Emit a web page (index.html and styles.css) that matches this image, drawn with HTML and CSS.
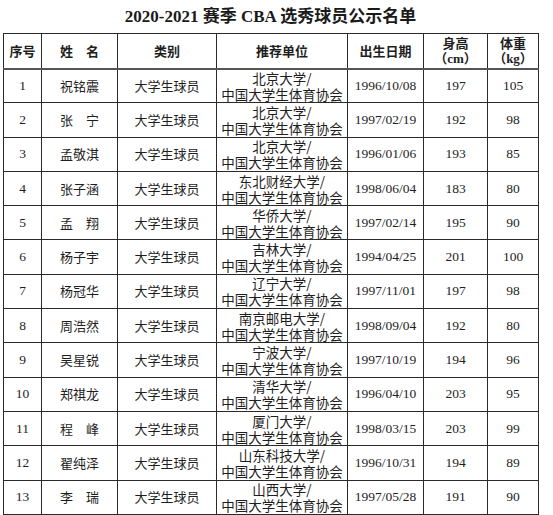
FILE: index.html
```html
<!DOCTYPE html>
<html lang="zh-CN">
<head>
<meta charset="utf-8">
<title>2020-2021 赛季 CBA 选秀球员公示名单</title>
<link rel="stylesheet" href="styles.css">
</head>
<body>
<div class="page">
  <h1 class="title">2020-2021 赛季 CBA 选秀球员公示名单</h1>
  <table class="roster">
    <colgroup>
      <col class="c-no"><col class="c-name"><col class="c-type"><col class="c-unit"><col class="c-date"><col class="c-h"><col class="c-w">
    </colgroup>
    <thead>
      <tr>
        <th>序号</th>
        <th>姓　名</th>
        <th>类别</th>
        <th>推荐单位</th>
        <th>出生日期</th>
        <th class="two"><span class="ln">身高</span><span class="ln unit">（cm）</span></th>
        <th class="two"><span class="ln">体重</span><span class="ln unit">（kg）</span></th>
      </tr>
    </thead>
    <tbody>
      <tr><td class="num">1</td><td>祝铭震</td><td>大学生球员</td><td class="unit-cell"><span class="ln">北京大学/</span><span class="ln">中国大学生体育协会</span></td><td class="num">1996/10/08</td><td class="num">197</td><td class="num">105</td></tr>
      <tr><td class="num">2</td><td>张　宁</td><td>大学生球员</td><td class="unit-cell"><span class="ln">北京大学/</span><span class="ln">中国大学生体育协会</span></td><td class="num">1997/02/19</td><td class="num">192</td><td class="num">98</td></tr>
      <tr><td class="num">3</td><td>孟敬淇</td><td>大学生球员</td><td class="unit-cell"><span class="ln">北京大学/</span><span class="ln">中国大学生体育协会</span></td><td class="num">1996/01/06</td><td class="num">193</td><td class="num">85</td></tr>
      <tr><td class="num">4</td><td>张子涵</td><td>大学生球员</td><td class="unit-cell"><span class="ln">东北财经大学/</span><span class="ln">中国大学生体育协会</span></td><td class="num">1998/06/04</td><td class="num">183</td><td class="num">80</td></tr>
      <tr><td class="num">5</td><td>孟　翔</td><td>大学生球员</td><td class="unit-cell"><span class="ln">华侨大学/</span><span class="ln">中国大学生体育协会</span></td><td class="num">1997/02/14</td><td class="num">195</td><td class="num">90</td></tr>
      <tr><td class="num">6</td><td>杨子宇</td><td>大学生球员</td><td class="unit-cell"><span class="ln">吉林大学/</span><span class="ln">中国大学生体育协会</span></td><td class="num">1994/04/25</td><td class="num">201</td><td class="num">100</td></tr>
      <tr><td class="num">7</td><td>杨冠华</td><td>大学生球员</td><td class="unit-cell"><span class="ln">辽宁大学/</span><span class="ln">中国大学生体育协会</span></td><td class="num">1997/11/01</td><td class="num">197</td><td class="num">98</td></tr>
      <tr><td class="num">8</td><td>周浩然</td><td>大学生球员</td><td class="unit-cell"><span class="ln">南京邮电大学/</span><span class="ln">中国大学生体育协会</span></td><td class="num">1998/09/04</td><td class="num">192</td><td class="num">80</td></tr>
      <tr><td class="num">9</td><td>吴星锐</td><td>大学生球员</td><td class="unit-cell"><span class="ln">宁波大学/</span><span class="ln">中国大学生体育协会</span></td><td class="num">1997/10/19</td><td class="num">194</td><td class="num">96</td></tr>
      <tr><td class="num">10</td><td>郑祺龙</td><td>大学生球员</td><td class="unit-cell"><span class="ln">清华大学/</span><span class="ln">中国大学生体育协会</span></td><td class="num">1996/04/10</td><td class="num">203</td><td class="num">95</td></tr>
      <tr><td class="num">11</td><td>程　峰</td><td>大学生球员</td><td class="unit-cell"><span class="ln">厦门大学/</span><span class="ln">中国大学生体育协会</span></td><td class="num">1998/03/15</td><td class="num">203</td><td class="num">99</td></tr>
      <tr><td class="num">12</td><td>翟纯泽</td><td>大学生球员</td><td class="unit-cell"><span class="ln">山东科技大学/</span><span class="ln">中国大学生体育协会</span></td><td class="num">1996/10/31</td><td class="num">194</td><td class="num">89</td></tr>
      <tr><td class="num">13</td><td>李　瑞</td><td>大学生球员</td><td class="unit-cell"><span class="ln">山西大学/</span><span class="ln">中国大学生体育协会</span></td><td class="num">1997/05/28</td><td class="num">191</td><td class="num">90</td></tr>
    </tbody>
  </table>
</div>
</body>
</html>
```

FILE: styles.css
```css
html, body {
  margin: 0;
  padding: 0;
  background: #ffffff;
}

.page {
  width: 553px;
  height: 515px;
  overflow: hidden;
  padding-left: 3px;
  box-sizing: border-box;
  color: #1e1e1e;
  font-family: "Noto Sans CJK SC", sans-serif;
}

.title {
  width: 535px;
  height: 33px;
  margin: 0;
  font-family: "Liberation Serif", "Noto Sans CJK SC", serif;
  font-size: 17px;
  font-weight: 700;
  line-height: 33px;
  text-align: center;
  color: #1a1a1a;
}

.roster {
  width: 535px;
  border-collapse: collapse;
  table-layout: fixed;
  border: 1px solid #222;
}

.c-no { width: 38px; }
.c-name { width: 76px; }
.c-type { width: 99px; }
.c-unit { width: 131px; }
.c-date { width: 76px; }
.c-h { width: 64px; }
.c-w { width: 51px; }

.roster th,
.roster td {
  border: 1px solid #2a2a2a;
  padding: 0;
  text-align: center;
  vertical-align: middle;
  white-space: nowrap;
  overflow: hidden;
}

.ln {
  display: block;
}

.roster thead tr {
  height: 35px;
}

.roster th {
  font-size: 13px;
  font-weight: 700;
  line-height: 16px;
  border-bottom: 2px solid #555;
}

.roster th.two .ln {
  line-height: 16px;
}

.roster .unit {
  font-family: "Liberation Serif", "Noto Sans CJK SC", serif;
  font-weight: 700;
  font-size: 13px;
}

.roster tbody tr {
  height: 34.3px;
}

.roster td {
  font-size: 13px;
  line-height: 16px;
  font-weight: 400;
}

.roster td.num {
  font-family: "Liberation Serif", serif;
  font-size: 13.5px;
}

.roster td.unit-cell {
  font-size: 13.5px;
}

.roster td.unit-cell .ln {
  line-height: 16px;
}
```
